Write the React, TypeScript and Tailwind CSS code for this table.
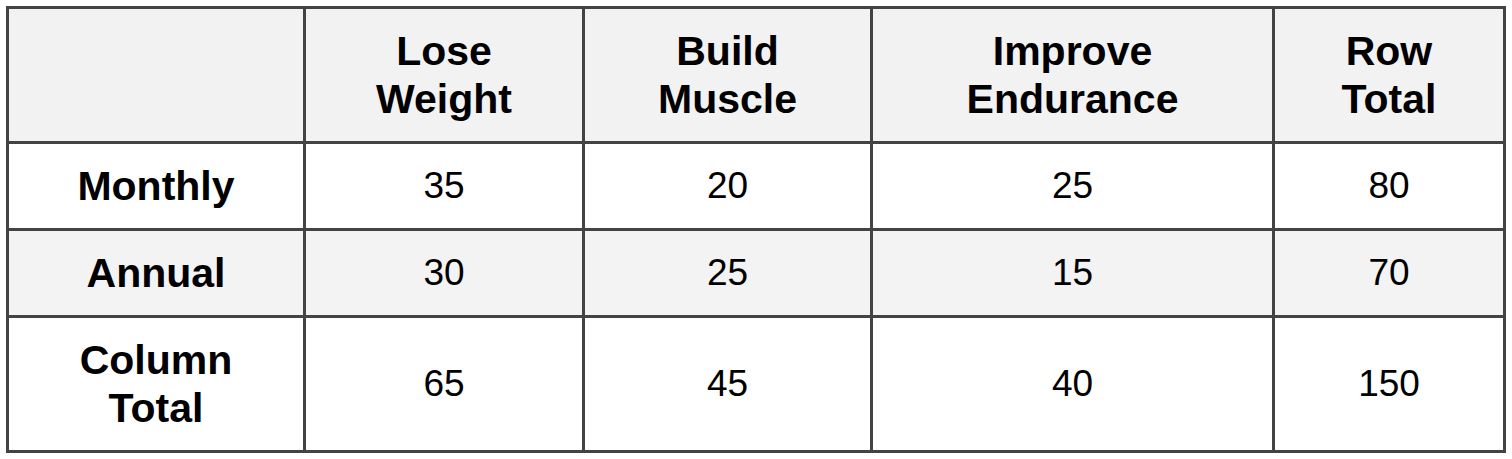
const COLS = ['Lose Weight', 'Build Muscle', 'Improve Endurance', 'Row Total'];

const ROWS: { label: string; values: number[]; shaded?: boolean; tall?: boolean }[] = [
  { label: 'Monthly', values: [35, 20, 25, 80] },
  { label: 'Annual', values: [30, 25, 15, 70], shaded: true },
  { label: 'Column Total', values: [65, 45, 40, 150], tall: true },
];

const WIDTHS = ['w-[294px]', 'w-[276px]', 'w-[285px]', 'w-[399px]', 'w-[228px]'];

function splitTwo(text: string) {
  const [a, ...rest] = text.split(' ');
  return rest.length ? (
    <>
      {a}
      <br />
      {rest.join(' ')}
    </>
  ) : (
    a
  );
}

export default function App() {
  return (
    <div className="h-[459px] w-[1512px] bg-white p-[6px] font-['Liberation_Sans',Arial,sans-serif] text-black">
      <table className="table-fixed border-separate border-spacing-[3px] bg-[#434343]">
        <colgroup>
          {WIDTHS.map((w) => (
            <col key={w} className={w} />
          ))}
        </colgroup>
        <thead>
          <tr className="h-[132px]">
            <th className="bg-[#f2f2f2] p-0" />
            {COLS.map((c) => (
              <th key={c} className="bg-[#f2f2f2] p-0 text-center align-middle text-[41px] font-bold leading-[48px]">
                {splitTwo(c)}
              </th>
            ))}
          </tr>
        </thead>
        <tbody>
          {ROWS.map((row) => {
            const bg = row.shaded ? 'bg-[#f3f3f3]' : 'bg-white';
            return (
              <tr key={row.label} className={row.tall ? 'h-[132px]' : 'h-[84px]'}>
                <th className={`${bg} p-0 text-center align-middle text-[41px] font-bold leading-[48px]`}>
                  {splitTwo(row.label)}
                </th>
                {row.values.map((v, i) => (
                  <td key={i} className={`${bg} p-0 text-center align-middle text-[37px] leading-[48px]`}>
                    {v}
                  </td>
                ))}
              </tr>
            );
          })}
        </tbody>
      </table>
    </div>
  );
}
